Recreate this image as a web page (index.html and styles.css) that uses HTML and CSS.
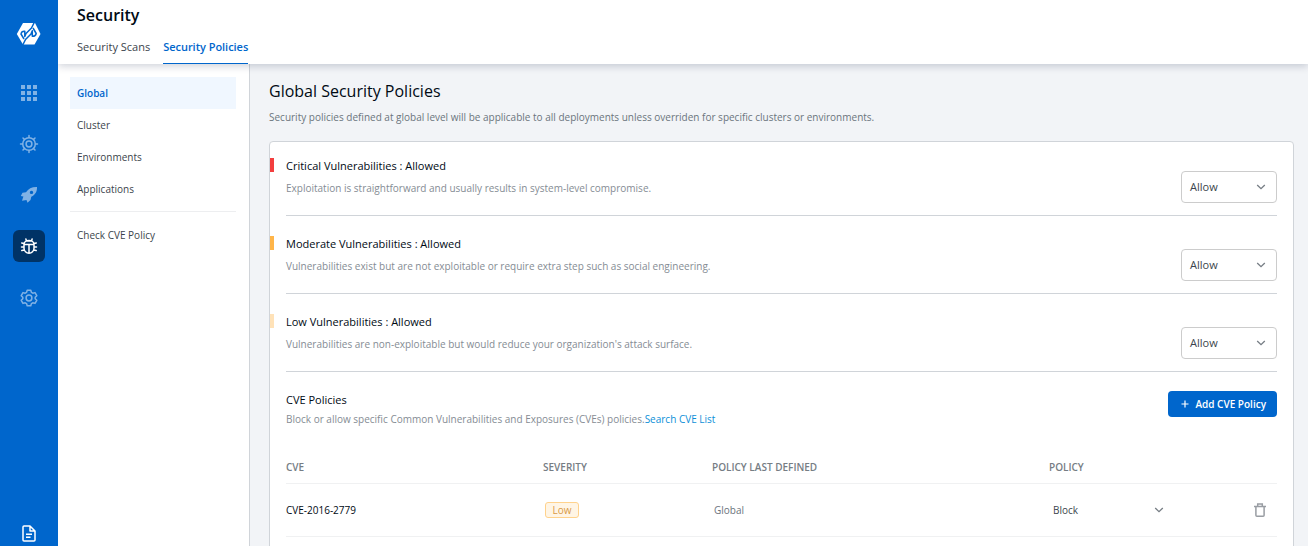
FILE: index.html
```html
<!DOCTYPE html>
<html lang="en">
<head>
<meta charset="utf-8">
<title>Security</title>
<link rel="stylesheet" href="styles.css">
</head>
<body>
<div class="app">
  <nav class="rail">
    <a class="rail-logo"><svg width="25" height="24" viewBox="0 0 25 24"><path fill="#fff" d="M7 1h12l5.500 11-6 10.500H7L.800 12z"/><path fill="none" stroke="#06c" stroke-width="1.500" stroke-linejoin="round" d="M18.500 0 15.500 6 10 11.500 8.800 14.500V9.300Q5.500 9 5 12L8 17M6.500 23.500 9.500 17.500 15 12 16.300 8.700V14.300Q19.500 14.500 20.200 11.500L17 6"/></svg></a>
    <a class="rail-item"><svg width="16" height="16" viewBox="0 0 16 16" fill="#80b2e5"><path d="M0 0h4v4H0zM6 0h4v4H6zM12 0h4v4h-4zM0 6h4v4H0zM6 6h4v4H6zM12 6h4v4h-4zM0 12h4v4H0zM6 12h4v4H6zM12 12h4v4h-4z"/></svg></a>
    <a class="rail-item"><svg width="20" height="20" viewBox="0 0 20 20" fill="none" stroke="#80b2e5" stroke-width="1.500" stroke-linecap="round"><circle cx="10" cy="10" r="6.300"/><circle cx="10" cy="10" r="2.900"/><path d="M10 3.500V1.500M10 16.500V18.500M3.500 10h-2M16.500 10h2M5.400 5.400 4 4M14.600 5.400 16 4M5.400 14.600 4 16M14.600 14.600 16 16"/></svg></a>
    <a class="rail-item"><svg width="18" height="18" viewBox="0 0 18 18" fill="#80b2e5"><path fill-rule="evenodd" d="M17 1c-5-.2-8.500 1.500-11 5.200L2.500 6.800.8 10l2.600.5L2 14.800 6.500 14l1 2.800 3-2.800.8-3.200C15.500 8.500 17.200 5.500 17 1zM11.500 4.700a1.700 1.700 0 1 1 0 3.400 1.700 1.700 0 0 1 0-3.400z"/></svg></a>
    <a class="rail-item rail-item-active"><svg width="18" height="18" viewBox="0 0 18 18" fill="none" stroke="#fff" stroke-width="1.500" stroke-linecap="round"><path d="M4 7.500h10v3.700a5 5 0 0 1-10 0zM4 7.500a5 4 0 0 1 10 0M9 7.500V16M6.300 3.500 5.900 2M11.700 3.500l.4-1.500M7 4h4M4 6.500 1.700 5.900M14 6.500l2.300-.6M4 10H1.500M14 10h2.500M4.300 13l-2.500.6M13.700 13l2.500.6"/></svg></a>
    <a class="rail-item"><svg width="18" height="18" viewBox="0 0 18 18" fill="none" stroke="#80b2e5" stroke-width="1.500" stroke-linejoin="round"><circle cx="9" cy="9" r="2.900"/><path d="M7.200 1.200h3.600l.6 2.200 1.400.8 2.200-.6 1.800 3.100L15.200 8.300v1.400l1.600 1.600-1.800 3.100-2.200-.6-1.400.8-.6 2.200H7.200l-.6-2.200-1.400-.8-2.200.6-1.800-3.100 1.600-1.600V8.300L1.200 6.700 3 3.600l2.200.6 1.400-.8z"/></svg></a>
    <a class="rail-doc"><svg width="14" height="17" viewBox="0 0 14 17" fill="none" stroke="#fff" stroke-width="1.500" stroke-linejoin="round"><path d="M2 1h6l5 5v9a1 1 0 0 1-1 1H2a1 1 0 0 1-1-1V2a1 1 0 0 1 1-1zM8 1v5h5M4 9.300h6M4 12.300h4.500"/></svg></a>
  </nav>
  <div class="page">
    <header class="top">
      <h1>Security</h1>
      <div class="tabs"><a class="tab tab-scans">Security Scans</a><a class="tab tab-active">Security Policies</a></div>
    </header>
    <div class="body">
      <aside class="side">
        <a class="side-link side-link-active">Global</a>
        <a class="side-link">Cluster</a>
        <a class="side-link">Environments</a>
        <a class="side-link">Applications</a>
        <hr>
        <a class="side-link">Check CVE Policy</a>
      </aside>
      <main class="content">
        <h2>Global Security Policies</h2>
        <p class="intro">Security policies defined at global level will be applicable to all deployments unless overriden for specific clusters or environments.</p>
        <section class="card">
          <div class="rule critical">
            <div class="rule-text"><h3>Critical Vulnerabilities : Allowed</h3><p>Exploitation is straightforward and usually results in system-level compromise.</p></div>
            <div class="select"><span>Allow</span><svg class="chev" viewBox="0 0 10 6"><path d="M1.200 1 5 4.700 8.800 1"/></svg></div>
          </div>
          <div class="rule moderate">
            <div class="rule-text"><h3>Moderate Vulnerabilities : Allowed</h3><p>Vulnerabilities exist but are not exploitable or require extra step such as social engineering.</p></div>
            <div class="select"><span>Allow</span><svg class="chev" viewBox="0 0 10 6"><path d="M1.200 1 5 4.700 8.800 1"/></svg></div>
          </div>
          <div class="rule low">
            <div class="rule-text"><h3>Low Vulnerabilities : Allowed</h3><p>Vulnerabilities are non-exploitable but would reduce your organization's attack surface.</p></div>
            <div class="select"><span>Allow</span><svg class="chev" viewBox="0 0 10 6"><path d="M1.200 1 5 4.700 8.800 1"/></svg></div>
          </div>
          <div class="cve-head">
            <div><h3>CVE Policies</h3><p>Block or allow specific Common Vulnerabilities and Exposures (CVEs) policies.<a>Search CVE List</a></p></div>
            <button class="add"><svg width="8" height="8" viewBox="0 0 8 8"><path d="M4 .5v7M.5 4h7" stroke="#fff" stroke-width="1.200"/></svg><span>Add CVE Policy</span></button>
          </div>
          <div class="row row-head"><span>CVE</span><span>SEVERITY</span><span>POLICY LAST DEFINED</span><span>POLICY</span></div>
          <div class="row row-item">
            <span class="cve-id">CVE-2016-2779</span>
            <span class="sev"><span class="badge">Low</span></span>
            <span class="scope">Global</span>
            <span class="policy"><span>Block</span><svg class="chev" viewBox="0 0 10 6"><path d="M1.200 1 5 4.700 8.800 1"/></svg></span>
            <svg class="trash" width="12" height="14" viewBox="0 0 12 14" fill="none" stroke="#999da3" stroke-width="1.500"><path d="M0 3.500h12M3.700 3V.9h4.600V3M1.900 3.500v8.700c0 .6.400 1 1 1h6.200c.6 0 1-.4 1-1V3.500"/></svg>
          </div>
        </section>
      </main>
    </div>
  </div>
</div>
</body>
</html>
```
FILE: styles.css
```css
* { box-sizing: border-box; }
body { margin: 0; overflow: hidden; font: 10px/20px "Open Sans", sans-serif; color: #3b444c; }
h1, h2, h3, p { margin: 0; }
svg { display: block; flex: none; }
.app { display: flex; height: 546px; overflow: hidden; }
.rail { width: 58px; flex: none; background: #06c; display: flex; flex-direction: column; align-items: center; padding: 22px 1px 0 0; }
.rail-logo { height: 24px; margin-bottom: 31px; }
.rail-item { width: 32px; height: 32px; margin-bottom: 19px; border-radius: 6px; display: flex; flex: none; align-items: center; justify-content: center; }
.rail-item-active { background: #036; margin-bottom: 19.500px; }
.rail-doc { margin-top: auto; margin-bottom: 4px; }
.page { flex: 1; min-width: 0; display: flex; flex-direction: column; }
.top { height: 64px; flex: none; padding: 5px 19px 0; position: relative; background: #fff; box-shadow: 0 2px 8px rgba(0, 20, 60, .2); clip-path: inset(0 0 -20px 0); }
.top h1 { font-size: 16px; line-height: 20px; font-weight: 600; color: #000a14; }
.tabs { display: flex; gap: 13px; padding-top: 11px; font-size: 11px; }
.tab { height: 28px; line-height: 22px; white-space: nowrap; }
.tab-active { color: #06c; font-weight: 600; letter-spacing: -.03px; border-bottom: 1px solid #06c; }
.body { flex: 1; display: flex; min-height: 0; }
.side { width: 192px; flex: none; border-right: 1px solid #d0d4d9; padding: 13px 13px 0 12px; background: #fff; }
.side-link { display: block; height: 32px; line-height: 32px; padding-left: 7px; white-space: nowrap; }
.side-link-active { color: #06c; background: #f0f7ff; font-weight: 600; }
.side hr { border: 0; height: 1px; background: #edeef0; margin: 6px 0 7px; }
.content { flex: 1; min-width: 0; background: #f2f4f7; padding: 15px 14px 0 19px; }
.content h2 { font-size: 16px; line-height: 24px; font-weight: 400; color: #000a14; }
.intro { line-height: 20px; margin-top: 4px; color: #6b747d; white-space: nowrap; }
.card { margin-top: 14px; height: 460px; background: #fff; border: 1px solid #d0d4d9; border-radius: 4px; padding: 0 16px; }
.rule { height: 78px; margin-left: -16px; padding-left: 16px; display: flex; justify-content: space-between; background: linear-gradient(#d0d4d9, #d0d4d9) 16px 100% / 100% 1px no-repeat; }
.rule:first-child { height: 74px; margin-top: 0; }
.rule-text { padding-top: 18px; position: relative; }
.rule:first-child .rule-text { padding-top: 14px; }
.rule-text::before { content: ""; position: absolute; left: -16px; top: 20px; width: 4px; height: 14px; background: var(--level); }
.rule:first-child .rule-text::before { top: 16px; }
.critical { --level: #f33e3e; }
.moderate { --level: #ffb549; }
.low { --level: #ffe2b8; }
h3 { font-size: 11px; line-height: 20px; font-weight: 400; color: #000a14; white-space: nowrap; }
.rule p, .cve-head p { color: #858c94; line-height: 20px; white-space: nowrap; }
.rule p { margin-top: 2px; }
.select { width: 96px; height: 32px; margin-top: 33px; border: 1px solid #ccc; border-radius: 4px; padding: 0 10px 0 8px; display: flex; align-items: center; justify-content: space-between; font-size: 11px; }
.rule:first-child .select { margin-top: 29px; }
.chev { width: 10px; height: 6px; fill: none; stroke: #767d84; stroke-width: 1.300; }
.cve-head { display: flex; justify-content: space-between; padding-top: 18px; height: 77px; }
.cve-head p { margin-top: -1px; }
.cve-head a { color: #0b8fd8; }
.add { width: 109px; height: 26px; margin-top: 1px; padding: 0 11px 0 13px; border: 0; border-radius: 4px; background: #06c; color: #fff; font: 600 10px/20px "Open Sans", sans-serif; display: flex; align-items: center; justify-content: space-between; white-space: nowrap; }
.row { display: grid; grid-template-columns: 257px 169px 337px 1fr 18px; align-items: center; border-bottom: 1px solid #f0f1f2; white-space: nowrap; }
.row-head { height: 35px; padding-top: 2px; color: #767d84; font-weight: 600; }
.row-item { height: 53px; }
.cve-id { color: #000a14; }
.sev { padding-left: 2px; }
.badge { display: block; width: 34px; height: 16px; line-height: 14px; text-align: center; border: 1px solid #ffd28c; border-radius: 3px; background: #fff5e5; color: #d99a45; }
.scope { padding-left: 2px; color: #6b747d; }
.policy { padding-left: 4px; width: 115px; display: flex; align-items: center; justify-content: space-between; }
.trash { justify-self: start; margin-left: -5px; }
```
